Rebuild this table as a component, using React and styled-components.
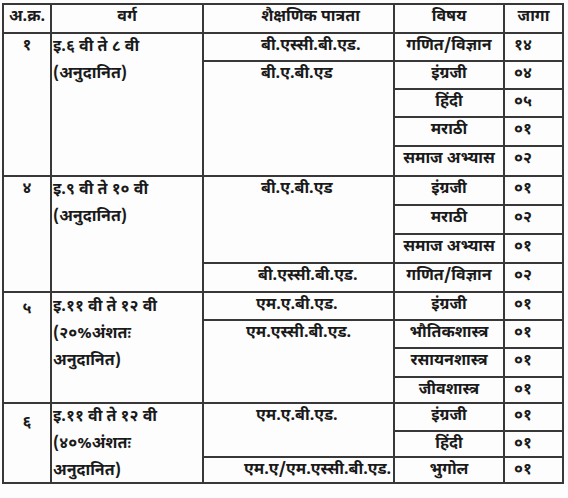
import React from "react";
import styled, { createGlobalStyle } from "styled-components";

const Global = createGlobalStyle`
  html, body { margin: 0; padding: 0; background: #fdfdfd; }
  body {
    font-family: "Noto Sans Devanagari", "Lohit Devanagari", "Mukta", "Noto Sans", sans-serif;
    color: #1a1a1a;
  }
`;

const Page = styled.div`
  width: 568px;
  height: 498px;
  padding: 3px 0 0 2px;
  box-sizing: border-box;
  background: #fdfdfd;
`;

const Grid = styled.div`
  display: grid;
  grid-template-columns: 46px 150px 189px 108px 57px;
  grid-template-rows: 27px 26px 26px 26px 27px 28px 27px 27px 27px 27px 26px 26px 27px 24px 26px 24px 24px;
  gap: 2px;
  padding: 2px;
  width: max-content;
  background: #383838;
`;

const Cell = styled.div`
  background: #fdfdfd;
  grid-column: ${(p) => p.$col};
  grid-row: ${(p) => p.$row};
  font-size: 16px;
  font-weight: 700;
  line-height: 26px;
  white-space: nowrap;
  overflow: hidden;
  box-sizing: border-box;
`;

const HeadCell = styled(Cell)`
  text-align: center;
  padding-left: ${(p) => p.$pl || 0}px;
`;

const NumCell = styled(Cell)`
  text-align: center;
  padding-top: ${(p) => p.$pt || 0}px;
`;

const ClassCell = styled(Cell)`
  padding: ${(p) => p.$pt || 0}px 0 0 1px;
  white-space: pre;
  line-height: 27px;
`;

const QualCell = styled(Cell)`
  padding-left: ${(p) => p.$pl}px;
`;

const SubjCell = styled(Cell)`
  text-align: center;
`;

const SeatCell = styled(Cell)`
  padding-left: 9px;
`;

const groups = [
  {
    start: 2,
    num: "१",
    numPt: 0,
    cls: "इ.६ वी ते ८ वी\n(अनुदानित)",
    clsPt: 0,
    quals: [
      { text: "बी.एस्सी.बी.एड.", span: 1, pl: 57 },
      { text: "बी.ए.बी.एड", span: 4, pl: 57 },
    ],
    subjects: [
      ["गणित/विज्ञान", "१४"],
      ["इंग्रजी", "०४"],
      ["हिंदी", "०५"],
      ["मराठी", "०१"],
      ["समाज अभ्यास", "०२"],
    ],
  },
  {
    start: 7,
    num: "४",
    numPt: 0,
    cls: "इ.९ वी ते १० वी\n(अनुदानित)",
    clsPt: 0,
    quals: [
      { text: "बी.ए.बी.एड", span: 3, pl: 57 },
      { text: "बी.एस्सी.बी.एड.", span: 1, pl: 54 },
    ],
    subjects: [
      ["इंग्रजी", "०१"],
      ["मराठी", "०२"],
      ["समाज अभ्यास", "०१"],
      ["गणित/विज्ञान", "०२"],
    ],
  },
  {
    start: 11,
    num: "५",
    numPt: 4,
    cls: "इ.११ वी ते १२ वी\n(२०%अंशतः\nअनुदानित)",
    clsPt: 1,
    quals: [
      { text: "एम.ए.बी.एड.", span: 1, pl: 52 },
      { text: "एम.एस्सी.बी.एड.", span: 3, pl: 42 },
    ],
    subjects: [
      ["इंग्रजी", "०१"],
      ["भौतिकशास्त्र", "०१"],
      ["रसायनशास्त्र", "०१"],
      ["जीवशास्त्र", "०१"],
    ],
  },
  {
    start: 15,
    num: "६",
    numPt: 7,
    cls: "इ.११ वी ते १२ वी\n(४०%अंशतः\nअनुदानित)",
    clsPt: 0,
    quals: [
      { text: "एम.ए.बी.एड.", span: 2, pl: 52 },
      { text: "एम.ए/एम.एस्सी.बी.एड.", span: 1, pl: 40 },
    ],
    subjects: [
      ["इंग्रजी", "०१"],
      ["हिंदी", "०१"],
      ["भुगोल", "०१"],
    ],
  },
];

function Group({ g }) {
  const n = g.subjects.length;
  const span = `${g.start} / span ${n}`;
  let r = g.start;
  return (
    <>
      <NumCell $col={1} $row={span} $pt={g.numPt}>{g.num}</NumCell>
      <ClassCell $col={2} $row={span} $pt={g.clsPt}>{g.cls}</ClassCell>
      {g.quals.map((q) => {
        const row = `${r} / span ${q.span}`;
        r += q.span;
        return (
          <QualCell key={q.text + row} $col={3} $row={row} $pl={q.pl}>
            {q.text}
          </QualCell>
        );
      })}
      {g.subjects.map(([s, v], i) => (
        <React.Fragment key={s + i}>
          <SubjCell $col={4} $row={g.start + i}>{s}</SubjCell>
          <SeatCell $col={5} $row={g.start + i}>{v}</SeatCell>
        </React.Fragment>
      ))}
    </>
  );
}

export default function App() {
  return (
    <Page>
      <Global />
      <Grid>
        <HeadCell $col={1} $row={1}>अ.क्र.</HeadCell>
        <HeadCell $col={2} $row={1}>वर्ग</HeadCell>
        <HeadCell $col={3} $row={1} $pl={24}>शैक्षणिक पात्रता</HeadCell>
        <HeadCell $col={4} $row={1}>विषय</HeadCell>
        <HeadCell $col={5} $row={1}>जागा</HeadCell>
        {groups.map((g) => (
          <Group key={g.start} g={g} />
        ))}
      </Grid>
    </Page>
  );
}
